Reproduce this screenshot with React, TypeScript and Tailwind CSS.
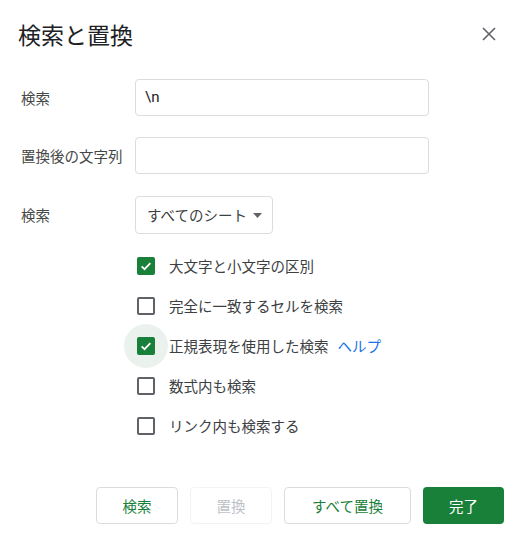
import React from "react";

const font = { fontFamily: '"Noto Sans CJK JP", "Noto Sans", Roboto, sans-serif' };

function Check({ checked, halo }: { checked: boolean; halo?: boolean }) {
  return (
    <div className="relative w-[18px] h-[18px] shrink-0">
      {halo && (
        <div className="absolute left-[-13px] top-[-13px] w-[44px] h-[44px] rounded-full bg-[#ebf2ed]" />
      )}
      {checked ? (
        <div className="relative w-[18px] h-[18px] rounded-[2px] bg-[#188038] flex items-center justify-center">
          <svg width="14" height="14" viewBox="0 0 24 24">
            <path d="M4.5 12.5l5 5L19.5 7" fill="none" stroke="#fff" strokeWidth="3" />
          </svg>
        </div>
      ) : (
        <div className="relative w-[18px] h-[18px] rounded-[2px] border-2 border-[#5f6368]" />
      )}
    </div>
  );
}

export default function App() {
  const opts: { t: string; c: boolean; halo?: boolean; help?: boolean }[] = [
    { t: "大文字と小文字の区別", c: true },
    { t: "完全に一致するセルを検索", c: false },
    { t: "正規表現を使用した検索", c: true, halo: true, help: true },
    { t: "数式内も検索", c: false },
    { t: "リンク内も検索する", c: false },
  ];
  return (
    <div className="w-[518px] h-[541px] bg-white flex flex-col" style={font}>
      <div className="h-[68px] flex items-center justify-between pl-[18px] pr-[22px]">
        <div className="text-[23px] text-[#202124] leading-none">検索と置換</div>
        <svg width="14" height="14" viewBox="0 0 14 14">
          <path d="M1 1L13 13M13 1L1 13" stroke="#5f6368" strokeWidth="1.6" />
        </svg>
      </div>
      <div className="mt-[11px] flex items-center">
        <div className="w-[135px] pl-[21px] text-[14.5px] text-[#444746]">検索</div>
        <div className="w-[294px] h-[37px] border border-[#dadce0] rounded-[4px] flex items-center pl-[9px] text-[15px] text-[#202124]" style={{ fontFamily: 'Roboto, "Noto Sans", sans-serif' }}>
          \n
        </div>
      </div>
      <div className="mt-[21px] flex items-center">
        <div className="w-[135px] pl-[21px] text-[14.5px] text-[#444746]">置換後の文字列</div>
        <div className="w-[294px] h-[37px] border border-[#dadce0] rounded-[4px]" />
      </div>
      <div className="mt-[22px] flex items-center">
        <div className="w-[135px] pl-[21px] text-[14.5px] text-[#444746]">検索</div>
        <div className="w-[138px] h-[38px] border border-[#dadce0] rounded-[4px] flex items-center pl-[11px] text-[14.5px] text-[#3c4043]">
          <span>すべてのシート</span>
          <svg width="9" height="5" viewBox="0 0 9 5" className="ml-[6px]">
            <path d="M0 0h9L4.5 5z" fill="#5f6368" />
          </svg>
        </div>
      </div>
      <div className="mt-[12px] flex flex-col pl-[137px]">
        {opts.map((o) => (
          <div key={o.t} className="h-[40px] flex items-center">
            <Check checked={o.c} halo={o.halo} />
            <span className="ml-[14px] text-[14.5px] text-[#3c4043] relative">{o.t}</span>
            {o.help && <span className="ml-[9px] text-[14.5px] text-[#1a73e8]">ヘルプ</span>}
          </div>
        ))}
      </div>
      <div className="mt-[41px] flex justify-end pr-[14px] gap-[12px]">
        <div className="w-[82px] h-[37px] border border-[#dadce0] rounded-[4px] flex items-center justify-center text-[14.5px] text-[#188038]">検索</div>
        <div className="w-[82px] h-[37px] border border-[#f1f3f4] rounded-[4px] flex items-center justify-center text-[14.5px] text-[#bdc1c6]">置換</div>
        <div className="w-[127px] h-[37px] border border-[#dadce0] rounded-[4px] flex items-center justify-center text-[14.5px] text-[#188038]">すべて置換</div>
        <div className="w-[81px] h-[37px] bg-[#188038] rounded-[4px] flex items-center justify-center text-[14.5px] text-white">完了</div>
      </div>
    </div>
  );
}
